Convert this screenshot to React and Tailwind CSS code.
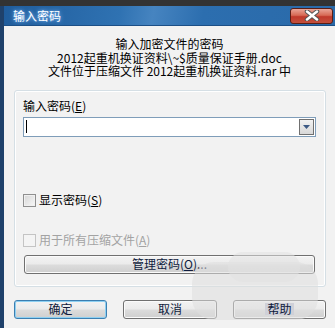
const FONT = "font-['SimSun','Noto_Sans_CJK_SC',sans-serif]";

function Btn({ children, primary, className = "" }) {
  return (
    <div
      className={[
        "h-[19px] rounded-[3px] border flex items-center justify-center text-[12px] leading-none text-[#0f1b3d]",
        "bg-[linear-gradient(to_bottom,#f3f3f3_0%,#ebebeb_48%,#dcdcdc_52%,#cfcfcf_100%)]",
        primary
          ? "border-[#3c7fb1] shadow-[inset_0_0_0_1px_#8ed0f2]"
          : "border-[#707070] shadow-[inset_0_0_0_1px_#fbfbfb]",
        className,
      ].join(" ")}
    >
      {children}
    </div>
  );
}

function Check({ label, disabled }) {
  return (
    <div className="flex items-center h-[13px]">
      <div
        className={[
          "w-[13px] h-[13px] border",
          disabled
            ? "border-[#c4c4c4] bg-[#f4f4f4]"
            : "border-[#8f8f8f] bg-[linear-gradient(135deg,#d6d6d6,#f8f8f8)] shadow-[inset_0_0_0_1px_#f0f0f0]",
        ].join(" ")}
      />
      <span
        className={[
          "ml-[3px] text-[12px] leading-none",
          disabled ? "text-[#a3a3a3]" : "text-black",
        ].join(" ")}
      >
        {label}
      </span>
    </div>
  );
}

export default function App() {
  return (
    <div className={`w-[335px] h-[328px] overflow-hidden relative bg-[#2f2f2f] flex flex-col ${FONT}`}>
      {/* desktop strip behind */}
      <div className="h-[6px] bg-[#333]" />

      <div className="flex-1 flex flex-col border-l-[4px] border-[#1f416b]">
        {/* Title bar */}
        <div className="h-[20px] flex items-center justify-between bg-[linear-gradient(100deg,#1f5c9c_0%,#2f72b2_35%,#4684c0_45%,#2c6eaf_60%,#2a6aa9_100%)] border-b border-[#1c4f86]">
          <span className="ml-[9px] text-[12px] leading-none text-white [text-shadow:0_0_4px_#8fc4ff,0_0_2px_#4f8fd0]">
            输入密码
          </span>
          <div className="mr-[2px] w-[43px] h-[16px] rounded-[3px] border border-[#5a1d14] bg-[linear-gradient(to_bottom,#e9a597_0%,#d76a55_45%,#c0392b_55%,#c4503c_100%)] flex items-center justify-center">
            <svg width="16" height="11" viewBox="0 0 16 11">
              <path d="M3 1.5 L13 9.5 M13 1.5 L3 9.5" stroke="#555" strokeWidth="4.5" strokeLinecap="round" />
              <path d="M3 1.5 L13 9.5 M13 1.5 L3 9.5" stroke="#fff" strokeWidth="2.5" strokeLinecap="round" />
            </svg>
          </div>
        </div>

        {/* Content */}
        <div className="flex-1 bg-[#f2f2f2] flex flex-col">
          <div className="pt-[11px] flex flex-col items-center text-[12px] leading-[13.5px] text-black">
            <span>输入加密文件的密码</span>
            <span>2012起重机换证资料\~$质量保证手册.doc</span>
            <span>文件位于压缩文件 2012起重机换证资料.rar 中</span>
          </div>

          {/* Group box */}
          <div className="mt-[12px] ml-[10px] mr-[9px] h-[197px] rounded-[3px] border border-[#d5dfe5] shadow-[inset_0_0_0_1px_#fff] flex flex-col pl-[8px] pr-[9px] pt-[9px]">
            <span className="text-[12px] leading-[12px] text-black">输入密码(<u>E</u>)</span>

            <div className="mt-[5px] h-[20px] border border-[#7f9db9] bg-white flex items-center justify-between">
              <div className="ml-[2px] w-[1px] h-[13px] bg-black" />
              <div className="mr-[1px] w-[15px] h-[16px] border border-[#707070] bg-[linear-gradient(to_bottom,#f2f2f2,#d8d8d8)] flex items-center justify-center">
                <svg width="7" height="4" viewBox="0 0 7 4">
                  <path d="M0 0 L7 0 L3.5 4 Z" fill="#3d5a85" />
                </svg>
              </div>
            </div>

            <div className="mt-[57px]">
              <Check label={<>显示密码(<u>S</u>)</>} />
            </div>
            <div className="mt-[27px]">
              <Check label={<>用于所有压缩文件(<u>A</u>)</>} disabled />
            </div>

            <Btn className="mt-[8px] ml-[1px] mr-[1px]">
              管理密码(<u>O</u>)...
            </Btn>
          </div>

          {/* Bottom buttons */}
          <div className="mt-[13px] ml-[10px] flex gap-[16px]">
            <Btn primary className="w-[93px]">确定</Btn>
            <Btn className="w-[94px]">取消</Btn>
            <Btn className="w-[93px]">
              <span className="relative z-10 px-[2px] bg-[#cfd0d8]">帮助</span>
            </Btn>
          </div>
        </div>
      </div>

      {/* watermark smudge */}
      <div className="absolute left-[192px] top-[262px] w-[126px] h-[58px] rounded-[22px] bg-[#dedede]/55" />
      <div className="absolute left-[228px] top-[252px] w-[72px] h-[30px] rounded-[18px] bg-[#e2e2e2]/55" />
    </div>
  );
}
